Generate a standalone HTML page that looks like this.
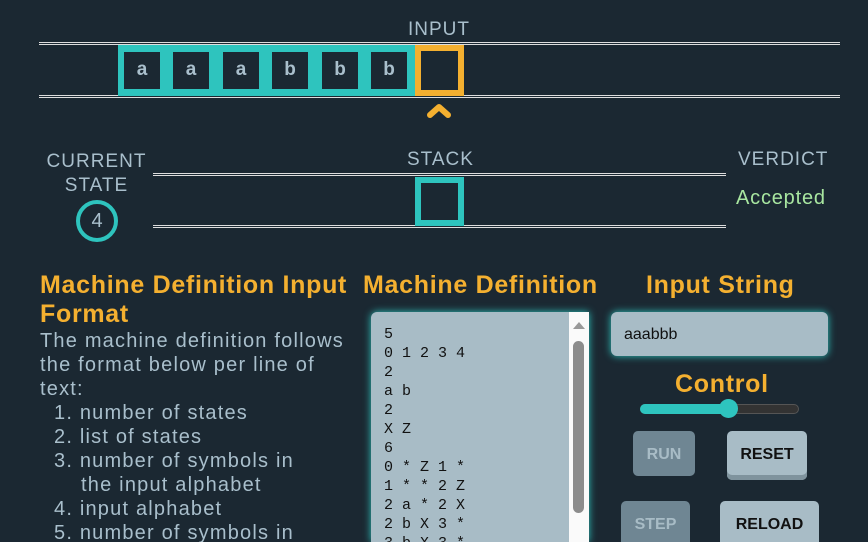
<!DOCTYPE html>
<html style="overflow:hidden;width:868px;height:542px"><head><style>
*{margin:0;padding:0;box-sizing:border-box}
body{width:868px;height:542px;overflow:hidden;background:#1b2832;font-family:"Liberation Sans",sans-serif;color:#a9bfcc;position:relative}
.a{position:absolute;white-space:nowrap}
.line{position:absolute;height:3px;border-top:1px solid #ddd;border-bottom:1px solid #ddd}
.cell{position:absolute;top:52px;width:36px;height:37px;background:#1b2832;color:#a9bfcc;font-weight:bold;font-size:19px;text-align:center;line-height:36px}
.h{color:#f4b030;font-weight:bold;font-size:25px;letter-spacing:0.7px}
.t{font-size:20px;line-height:24px;letter-spacing:1.2px}
.u{font-size:19px;letter-spacing:1px}
.btn{position:absolute;border-radius:5px;font-weight:bold;font-size:16px;text-align:center}
</style></head><body>
<div class="a u" style="left:408px;top:19px">INPUT</div>
<div class="line" style="left:39px;top:42px;width:801px"></div>
<div class="line" style="left:39px;top:95px;width:801px"></div>
<div class="a" style="left:118px;top:45px;width:297px;height:51px;background:#2ec4be"></div>
<div class="cell" style="left:124px">a</div>
<div class="cell" style="left:173px">a</div>
<div class="cell" style="left:223px">a</div>
<div class="cell" style="left:272px">b</div>
<div class="cell" style="left:322px">b</div>
<div class="cell" style="left:371px">b</div>
<div class="a" style="left:415px;top:45px;width:49px;height:51px;border:6px solid #f4b030"></div>
<svg class="a" style="left:426px;top:101px" width="26" height="20"><path d="M4 14 L13 6 L22 14" stroke="#f4b030" stroke-width="6" fill="none" stroke-linecap="round" stroke-linejoin="round"/></svg>

<div class="a u" style="left:44px;top:150px;text-align:center;width:105px;line-height:24px">CURRENT<br>STATE</div>
<div class="a" style="left:76px;top:200px;width:42px;height:42px;border:4px solid #2ec4be;border-radius:50%;text-align:center;line-height:34px;font-size:20px">4</div>
<div class="a u" style="left:407px;top:149px">STACK</div>
<div class="line" style="left:153px;top:173px;width:573px"></div>
<div class="line" style="left:153px;top:225px;width:573px"></div>
<div class="a" style="left:415px;top:177px;width:49px;height:49px;border:6px solid #2ec4be"></div>
<div class="a u" style="left:738px;top:149px">VERDICT</div>
<div class="a" style="left:736px;top:187px;font-size:20px;letter-spacing:0.8px;color:#a8e6a0">Accepted</div>

<div class="a h" style="left:40px;top:271px;line-height:29px">Machine Definition Input<br>Format</div>
<div class="a t" style="left:40px;top:329px">The machine definition follows<br>the format below per line of<br>text:</div>
<div class="a t" style="left:54px;top:401px">1. number of states<br>2. list of states<br>3. number of symbols in<br>&nbsp;&nbsp;&nbsp;&nbsp;the input alphabet<br>4. input alphabet<br>5. number of symbols in</div>

<div class="a h" style="left:363px;top:271px">Machine Definition</div>
<div class="a" style="left:371px;top:312px;width:218px;height:230px;background:#a8bcc6;border-radius:6px 0 0 0;box-shadow:0 0 8px #2ec4be;overflow:hidden">
<pre style="position:absolute;left:13px;top:13px;font-family:'Liberation Mono',monospace;font-size:15px;line-height:19px;color:#111">5
0 1 2 3 4
2
a b
2
X Z
6
0 * Z 1 *
1 * * 2 Z
2 a * 2 X
2 b X 3 *
3 b X 3 *</pre>
<div style="position:absolute;left:198px;top:0;width:20px;height:240px;background:#fafafa"></div>
<div style="position:absolute;left:202px;top:10px;width:0;height:0;border-left:6px solid transparent;border-right:6px solid transparent;border-bottom:7px solid #999"></div>
<div style="position:absolute;left:202px;top:29px;width:11px;height:172px;background:#8c8c8c;border-radius:6px"></div>
</div>

<div class="a h" style="left:646px;top:271px">Input String</div>
<div class="a" style="left:611px;top:312px;width:217px;height:44px;background:#a8bcc6;border-radius:6px;box-shadow:0 0 8px #2ec4be;font-size:16px;color:#111;padding:14px 0 0 13px">aaabbb</div>
<div class="a h" style="left:675px;top:370px">Control</div>
<div class="a" style="left:640px;top:404px;width:159px;height:10px;background:#333;border:1px solid #555;border-radius:5px"></div>
<div class="a" style="left:640px;top:404px;width:90px;height:10px;background:#2ec4be;border-radius:5px"></div>
<div class="a" style="left:719px;top:399px;width:19px;height:19px;background:#2ec4be;border-radius:50%"></div>
<div class="btn" style="left:633px;top:431px;width:62px;height:45px;background:#6f8693;color:#a8bcc6;line-height:47px">RUN</div>
<div class="btn" style="left:727px;top:431px;width:80px;height:49px;background:#a8bcc6;color:#111;line-height:47px;box-shadow:inset 0 -5px 0 #7f939d">RESET</div>
<div class="btn" style="left:621px;top:501px;width:69px;height:50px;background:#6f8693;color:#a8bcc6;line-height:48px">STEP</div>
<div class="btn" style="left:720px;top:501px;width:99px;height:50px;background:#a8bcc6;color:#111;line-height:48px">RELOAD</div>
</body></html>
